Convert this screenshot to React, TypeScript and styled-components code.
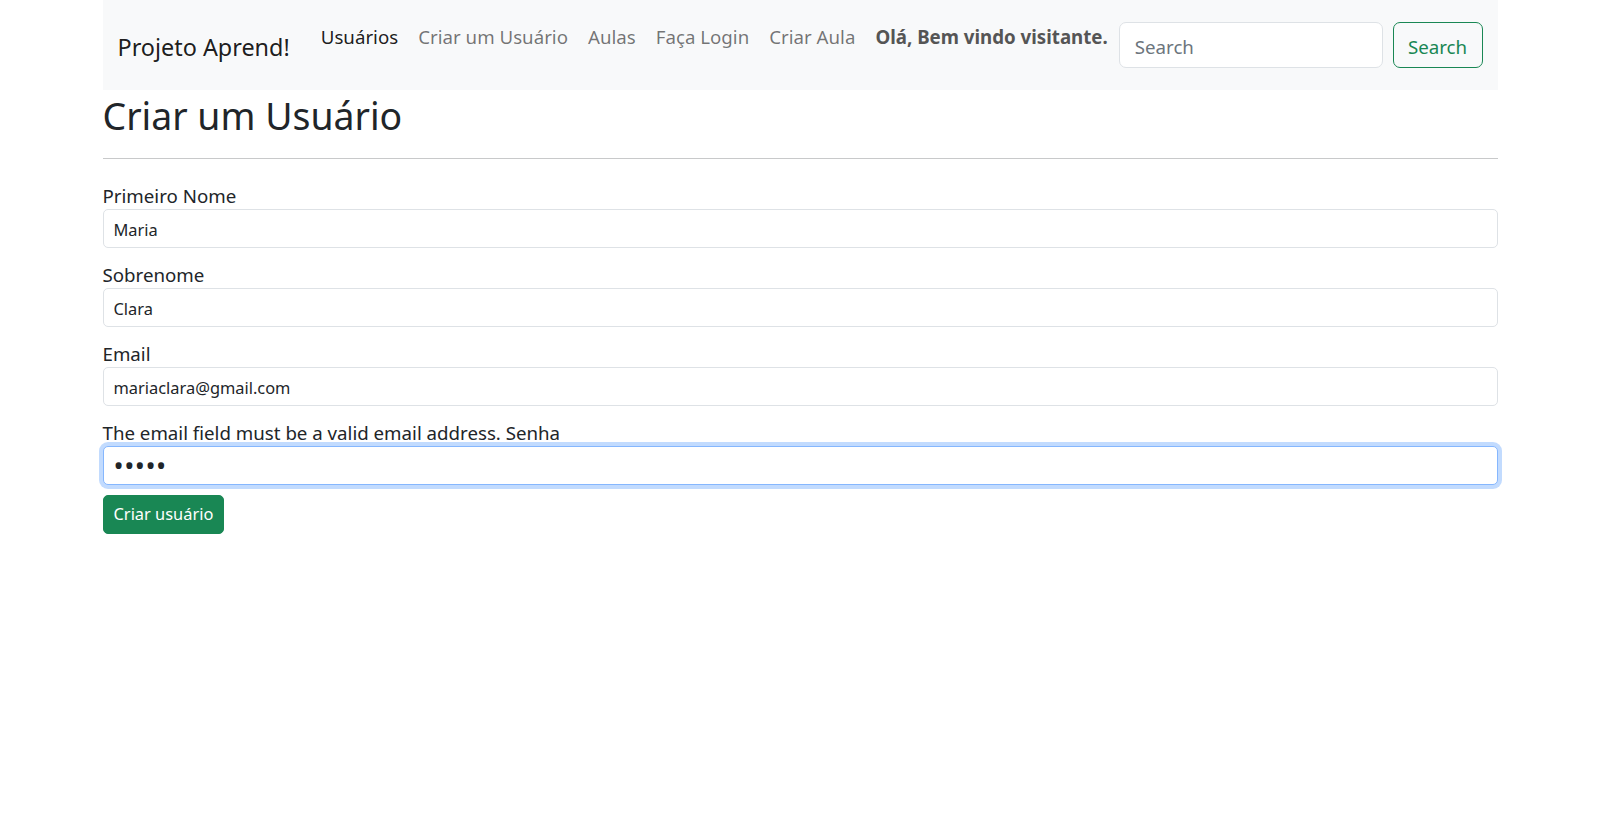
import React from "react";
import styled, { createGlobalStyle } from "styled-components";

const GlobalStyle = createGlobalStyle`
  * { box-sizing: border-box; }
  html, body { margin: 0; padding: 0; background: #ffffff; }
  body {
    font-family: "Noto Sans", "Open Sans", sans-serif;
    color: #212529;
    font-size: 18.7px;
    line-height: 1.5;
  }
`;

const Container = styled.div`
  width: 1395px;
  margin: 0 auto;
`;

const NavBar = styled.nav`
  display: flex;
  align-items: center;
  height: 90px;
  padding: 0 15px;
  background: #f8f9fa;
`;

const Brand = styled.a`
  font-size: 23.4px;
  line-height: 37.5px;
  padding-top: 5px;
  color: rgba(0, 0, 0, 0.9);
  text-decoration: none;
  margin-right: 21px;
  white-space: nowrap;
`;

const NavList = styled.ul`
  display: flex;
  align-self: flex-start;
  list-style: none;
  margin: 0;
  padding: 12px 0 0;
`;

const NavItem = styled.li`
  display: flex;
`;

const NavLink = styled.a<{ $active?: boolean }>`
  display: block;
  padding: 10px 10px;
  font-size: 18.7px;
  line-height: 30px;
  white-space: nowrap;
  text-decoration: none;
  color: ${(p) => (p.$active ? "rgba(0, 0, 0, 0.9)" : "rgba(0, 0, 0, 0.55)")};
`;

const Greeting = styled.strong`
  display: block;
  padding: 10px 10px;
  font-size: 18.7px;
  line-height: 30px;
  font-weight: 700;
  white-space: nowrap;
  color: #555555;
`;

const SearchForm = styled.form`
  display: flex;
  flex: 1;
  min-width: 0;
  margin-left: 1px;
  gap: 10px;
`;

const SearchInput = styled.input`
  flex: 1;
  min-width: 0;
  height: 46px;
  padding: 8px 15px 6px;
  font-family: inherit;
  font-size: 18.7px;
  color: #212529;
  background: #ffffff;
  border: 1px solid #dee2e6;
  border-radius: 7px;
  outline: none;
  &::placeholder { color: #6c757d; }
`;

const OutlineButton = styled.button`
  width: 90px;
  height: 46px;
  padding: 2px 0 0;
  font-family: inherit;
  font-size: 18.7px;
  color: #198754;
  background: transparent;
  border: 1px solid #198754;
  border-radius: 7px;
`;

const Title = styled.h2`
  margin: 0 0 10px;
  padding-top: 4px;
  font-size: 37.4px;
  line-height: 44px;
  font-weight: 400;
  color: #212529;
`;

const Rule = styled.hr`
  margin: 20px 0;
  border: 0;
  border-top: 1px solid #c8c9ca;
`;

const Form = styled.form`
  display: flex;
  flex-direction: column;
`;

const Field = styled.div`
  display: flex;
  flex-direction: column;
  margin-bottom: 10px;
`;

const Label = styled.label<{ $inline?: boolean }>`
  display: ${(p) => (p.$inline ? "inline" : "block")};
  font-size: 18.7px;
  line-height: 30px;
  padding-top: ${(p) => (p.$inline ? "0" : "2px")};
  height: ${(p) => (p.$inline ? "auto" : "30px")};
  color: #212529;
`;

const TextLine = styled.div`
  font-size: 18.7px;
  line-height: 30px;
  height: 30px;
  padding-top: 2px;
  color: #212529;
`;

const Input = styled.input<{ $focused?: boolean }>`
  width: 100%;
  height: 39px;
  padding: 6px 10px 4px;
  font-family: inherit;
  font-size: 16.4px;
  color: #212529;
  background: #ffffff;
  border: 1px solid ${(p) => (p.$focused ? "#86b7fe" : "#dee2e6")};
  border-radius: 5px;
  outline: none;
  box-shadow: ${(p) => (p.$focused ? "0 0 0 4px rgba(13, 110, 253, 0.25)" : "none")};
`;

const PasswordInput = styled(Input)`
  padding: 0 10px;
  font-size: 27px;
  line-height: 37px;
  letter-spacing: 0.5px;
`;

const SubmitButton = styled.button`
  align-self: flex-start;
  height: 39px;
  padding: 5px 10px;
  font-family: inherit;
  font-size: 16.4px;
  line-height: 1.5;
  color: #ffffff;
  background: #198754;
  border: 1px solid #198754;
  border-radius: 5px;
`;

export default function App() {
  return (
    <>
      <GlobalStyle />
      <Container>
        <NavBar>
          <Brand href="#">Projeto Aprend!</Brand>
          <NavList>
            <NavItem><NavLink $active href="#">Usuários</NavLink></NavItem>
            <NavItem><NavLink href="#">Criar um Usuário</NavLink></NavItem>
            <NavItem><NavLink href="#">Aulas</NavLink></NavItem>
            <NavItem><NavLink href="#">Faça Login</NavLink></NavItem>
            <NavItem><NavLink href="#">Criar Aula</NavLink></NavItem>
            <NavItem><Greeting>Olá, Bem vindo visitante.</Greeting></NavItem>
          </NavList>
          <SearchForm onSubmit={(e) => e.preventDefault()}>
            <SearchInput type="search" placeholder="Search" aria-label="Search" />
            <OutlineButton type="submit">Search</OutlineButton>
          </SearchForm>
        </NavBar>

        <Title>Criar um Usuário</Title>
        <Rule />

        <Form onSubmit={(e) => e.preventDefault()}>
          <Field>
            <Label htmlFor="nome">Primeiro Nome</Label>
            <Input id="nome" type="text" defaultValue="Maria" />
          </Field>
          <Field>
            <Label htmlFor="sobrenome">Sobrenome</Label>
            <Input id="sobrenome" type="text" defaultValue="Clara" />
          </Field>
          <Field>
            <Label htmlFor="email">Email</Label>
            <Input id="email" type="text" defaultValue="mariaclara@gmail.com" />
          </Field>
          <Field>
            <TextLine>
              The email field must be a valid email address.{" "}
              <Label $inline htmlFor="senha">Senha</Label>
            </TextLine>
            <PasswordInput id="senha" type="password" defaultValue="12345" $focused />
          </Field>
          <SubmitButton type="submit">Criar usuário</SubmitButton>
        </Form>
      </Container>
    </>
  );
}
